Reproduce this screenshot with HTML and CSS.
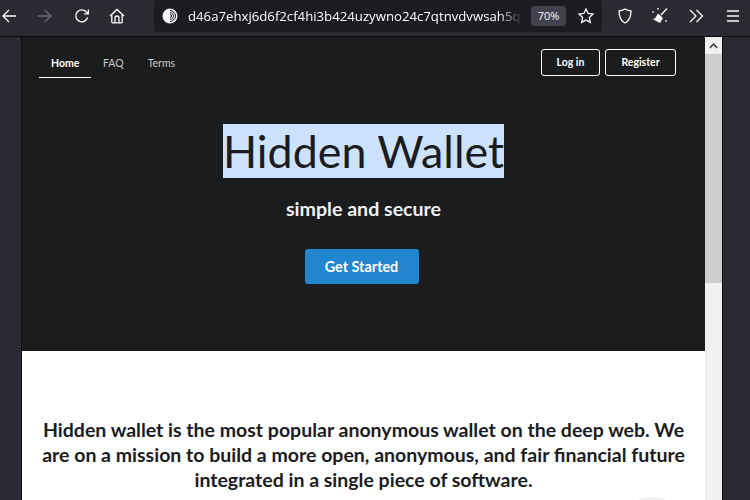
FILE: index.html
```html
<!doctype html>
<html>
  <head>
    <meta charset="UTF-8" />
    <title>Hidden Wallet</title>
    <link rel="stylesheet" href="styles.css">
  </head>
  <body>
    <header class="toolbar">
      <svg class="tool tool-back" viewBox="0 0 16 16"><path d="M15 8H2M8 2L2 8l6 6" /></svg>
      <svg class="tool tool-forward" viewBox="0 0 16 16"><path d="M1 8h13M8 2l6 6-6 6" /></svg>
      <svg class="tool tool-reload" viewBox="0 0 16 16"><path d="M13.6 9.500A6 6 0 1 1 12.200 3.700L14 5.600M14.400 1.500v4.300h-4.300" /></svg>
      <svg class="tool tool-home" viewBox="0 0 16 16"><path d="M1 8l7-6.500L15 8M2.800 6.500V14a.8.8 0 0 0 .8.8h8.800a.8.8 0 0 0 .8-.8V6.500M6 14.800V10a2 2 0 0 1 4 0v4.800" /></svg>
      <div class="urlbar">
        <svg class="onion" viewBox="0 0 16 16">
          <circle cx="8" cy="8" r="7.500" fill="#fbfbfe" />
          <path d="M8 2.500a5.500 5.500 0 0 1 0 11M8 4.500a3.500 3.500 0 0 1 0 7M8 6.500a1.500 1.500 0 0 1 0 3" fill="none" stroke="#1c1b22" stroke-width="1" />
        </svg>
        <span class="url">d46a7ehxj6d6f2cf4hi3b424uzywno24c7qtnvdvwsah5q</span>
        <span class="zoom-level">70%</span>
        <svg class="tool tool-star" viewBox="0 0 16 16"><path d="M8 1l2.100 4.500 4.900.6-3.600 3.400.9 4.900L8 12l-4.300 2.400.9-4.900L1 6.100l4.900-.6z" /></svg>
      </div>
      <svg class="tool tool-shield" viewBox="0 0 16 16"><path d="M8 1c2 1.200 4 1.800 6 1.800 0 6-1.500 10-6 12.200C3.500 12.800 2 8.800 2 2.800 4 2.800 6 2.200 8 1z" /></svg>
      <svg class="tool tool-broom" viewBox="0 0 18 16">
        <path class="solid" d="M7 5.500l5 4.500-3 5-7.500-4 2.500-.5z" />
        <path d="M16 .5l-6 6.500M7 0v1.500M6.300.8h1.500M2 3.200v1.500M1.300 4h1.500M15 12.200v1.600M14.200 13h1.600" />
      </svg>
      <svg class="tool tool-more" viewBox="0 0 16 16"><path d="M2 2l6 6-6 6M8.500 2l6 6-6 6" /></svg>
      <svg class="tool tool-menu" viewBox="0 0 16 16"><path d="M2 3h12M2 8h12M2 13h12" /></svg>
    </header>
    <div class="window">
      <main class="page">
        <section class="hero">
          <nav class="nav">
            <div class="nav-links">
              <a class="nav-link nav-link-active">Home</a>
              <a class="nav-link">FAQ</a>
              <a class="nav-link">Terms</a>
            </div>
            <div class="nav-actions">
              <a class="btn-outline btn-login">Log in</a>
              <a class="btn-outline btn-register">Register</a>
            </div>
          </nav>
          <h1 class="hero-title"><span class="selected">Hidden Wallet</span></h1>
          <p class="hero-sub">simple and secure</p>
          <a class="btn-primary">Get Started</a>
        </section>
        <section class="intro">
          <h2 class="intro-text">Hidden wallet is the most popular anonymous wallet on the deep web. We are on a mission to build a more open, anonymous, and fair financial future integrated in a single piece of software.</h2>
          <div class="intro-art"></div>
        </section>
      </main>
      <div class="scrollbar">
        <div class="scroll-up"><svg viewBox="0 0 10 6"><path d="M1 5l4-4 4 4" /></svg></div>
        <div class="scroll-thumb"></div>
      </div>
    </div>
  </body>
</html>
```

FILE: styles.css
```css
* {
  margin: 0;
  padding: 0;
  box-sizing: border-box;
}

html,
body {
  width: 750px;
  height: 500px;
  overflow: hidden;
}

body {
  background: #2b2a33;
  font-family: Lato, sans-serif;
}

.toolbar {
  display: flex;
  align-items: center;
  height: 37px;
  background: #2b2a33;
  border-bottom: 1px solid #0c0c0d;
  padding: 0 0 4px 1px;
}

.tool {
  flex: none;
  width: 16px;
  height: 16px;
  fill: none;
  stroke: #fbfbfe;
  stroke-width: 1.300;
}

.tool-forward {
  margin-left: 20px;
  stroke: #6b6a72;
}

.tool-reload {
  margin-left: 21px;
}

.tool-home {
  margin-left: 19px;
}

.urlbar {
  display: flex;
  align-items: center;
  width: 448px;
  height: 32px;
  margin-left: 29px;
  padding: 0 8px;
  background: #1c1b22;
  border-radius: 4px;
}

.onion {
  flex: none;
  width: 16px;
  height: 16px;
}

.url {
  width: 334px;
  margin-left: 10px;
  white-space: nowrap;
  color: #fbfbfe;
  font-family: "Open Sans", sans-serif;
  font-size: 13.200px;
  -webkit-mask-image: linear-gradient(to right, #000 93%, transparent);
  mask-image: linear-gradient(to right, #000 93%, transparent);
}

.zoom-level {
  flex: none;
  width: 35px;
  height: 20px;
  margin-left: 9px;
  background: #42414d;
  border-radius: 4px;
  color: #fbfbfe;
  font-family: "Open Sans", sans-serif;
  font-size: 11px;
  line-height: 20px;
  text-align: center;
}

.tool-star {
  margin-left: 12px;
}

.tool-shield {
  margin-left: 15px;
}

.tool-broom {
  width: 18px;
  margin-left: 18px;
}

.tool-broom .solid {
  fill: #fbfbfe;
  stroke: none;
}

.tool-more {
  margin-left: 19px;
}

.tool-menu {
  margin-left: 21px;
}

.window {
  display: flex;
  height: 463px;
  margin-left: 21px;
  width: 702px;
  border-left: 1px solid #0c0c0d;
  border-right: 1px solid #0c0c0d;
}

.page {
  flex: none;
  width: 683px;
  background: #fff;
  overflow: hidden;
}

.hero {
  display: flex;
  flex-direction: column;
  align-items: center;
  height: 314px;
  padding: 12px 29px 0 17px;
  background: #1b1c1e;
}

.nav {
  display: flex;
  justify-content: space-between;
  align-items: flex-start;
  width: 100%;
}

.nav-links {
  display: flex;
  align-items: flex-start;
}

.nav-link {
  padding: 0 12px;
  height: 29px;
  line-height: 28px;
  font-size: 10.500px;
  font-weight: 400;
  color: #c9c9c9;
}

.nav-link-active {
  color: #fff;
  font-weight: 700;
  border-bottom: 1px solid #fff;
  width: 52px;
}

.nav-actions {
  display: flex;
  gap: 5px;
}

.btn-outline {
  display: block;
  height: 27px;
  line-height: 25px;
  border: 1px solid #fff;
  border-radius: 3px;
  color: #fff;
  font-size: 10.500px;
  font-weight: 700;
  text-align: center;
}

.btn-login {
  width: 59px;
}

.btn-register {
  width: 71px;
}

.hero-title {
  margin-top: 46px;
  margin-left: 12px;
  font-size: 44.800px;
  font-weight: 400;
  line-height: 54px;
  color: #1b1c1e;
}

.selected {
  display: block;
  background: #cde2fe;
}

.hero-sub {
  margin-top: 19px;
  margin-left: 12px;
  font-size: 19.600px;
  font-weight: 700;
  line-height: 24px;
  color: #f1f1f1;
}

.btn-primary {
  display: block;
  width: 114px;
  height: 35px;
  margin-top: 28px;
  margin-left: 8px;
  background: #2185d0;
  border-radius: 3px;
  color: #fff;
  font-size: 14.400px;
  font-weight: 700;
  line-height: 35px;
  text-align: center;
}

.intro {
  padding: 66px 15px 0;
}

.intro-text {
  font-size: 19.500px;
  font-weight: 700;
  line-height: 25px;
  text-align: center;
  color: #1b1c1e;
}

.intro-art {
  width: 78px;
  height: 78px;
  margin: 5px 0 0 576px;
  background: #f0f0f0;
  border-radius: 50%;
}

.scrollbar {
  flex: none;
  width: 17px;
  background: #f0f0f0;
}

.scroll-up {
  display: flex;
  align-items: center;
  justify-content: center;
  height: 17px;
}

.scroll-up svg {
  width: 9px;
  height: 6px;
  fill: none;
  stroke: #505050;
  stroke-width: 2;
}

.scroll-thumb {
  height: 229px;
  background: #cdcdcd;
}
```
